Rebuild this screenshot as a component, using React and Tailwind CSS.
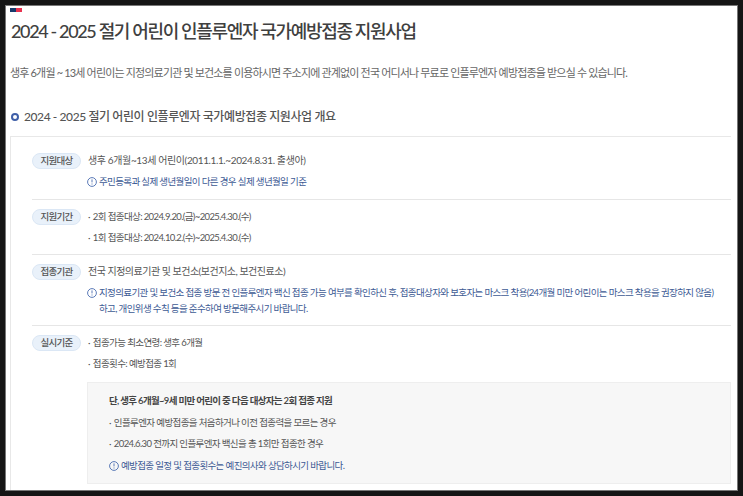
const FONT = "font-['Lato','Noto_Sans_CJK_KR',sans-serif]";

const InfoIcon = () => (
    <svg width="10" height="10" viewBox="0 0 10 10" fill="none" className="shrink-0 mt-[3px]">
        <circle cx="5" cy="5" r="4.4" stroke="#4a6cb0" strokeWidth="0.9" />
        <path d="M5 2.4v3M5 6.5v1" stroke="#4a6cb0" strokeWidth="0.9" />
    </svg>
);

const Badge = ({ children }) => (
    <span className="w-[49px] h-[16px] shrink-0 flex items-center justify-center rounded-full bg-[#e9f1fa] border border-[#dbe7f5] text-[9.5px] font-medium tracking-[-0.8px] text-[#555]">
        {children}
    </span>
);

const Note = ({ children, className = "" }) => (
    <div className={`flex gap-[2px] text-[9.5px] leading-[16px] tracking-[-0.63px] text-[#3d5a94] ${className}`}>
        <InfoIcon />
        <p>{children}</p>
    </div>
);

const Line = ({ children, className = "" }) => (
    <p className={`text-[10px] leading-[16px] text-[#555] ${className}`}>{children}</p>
);

// dotted list line
const Dot = ({ children, className = "" }) => (
    <p className={`text-[9.5px] leading-[16px] tracking-[-0.62px] text-[#555] ${className}`}>
        <span className="mr-[3px]">·</span>
        {children}
    </p>
);

const Row = ({ label, children, last }) => (
    <div className={`flex gap-[7px] pt-[9px] ${last ? "" : "border-b border-[#e6e6e6]"}`}>
        <Badge>{label}</Badge>
        <div className="flex-1 -mt-px">{children}</div>
    </div>
);

const App = () => {
    return (
        <div className={`w-[743px] h-[496px] overflow-hidden bg-[#151515] pt-[5px] pl-[5px] ${FONT}`}>
            <div className="w-[733px] h-[486px] bg-white border border-[#777] pl-[4px] pr-[6px] overflow-hidden">
                <div className="flex w-[12px] h-[4px] mt-[2px]">
                    <span className="w-[6px] bg-[#173a6b]" />
                    <span className="w-[6px] bg-[#e8324f]" />
                </div>
                <h1 className="mt-[6px] ml-px text-[18px] leading-[26px] font-medium tracking-[-1.35px] text-[#404040]">
                    2024 - 2025 절기 어린이 인플루엔자 국가예방접종 지원사업
                </h1>
                <p className="mt-[21px] text-[11px] leading-[16px] tracking-[-0.83px] text-[#666]">
                    생후 6개월 ~ 13세 어린이는 지정의료기관 및 보건소를 이용하시면 주소지에 관계없이 전국 어디서나 무료로 인플루엔자 예방접종을 받으실 수 있습니다.
                </p>
                <div className="mt-[27px] flex items-center gap-[5px]">
                    <span className="w-[8px] h-[8px] ml-px rounded-full border-2 border-[#3f5fa8]" />
                    <h2 className="text-[12px] leading-[18px] font-medium tracking-[-0.4px] text-[#555]">
                        2024 - 2025 절기 어린이 인플루엔자 국가예방접종 지원사업 개요
                    </h2>
                </div>

                <div className="mt-[10px] h-[360px] border-l border-t border-[#e8e8e8] pl-[21px] pt-[7px]">
                    <Row label="지원대상">
                        <Line className="tracking-[-0.38px]">생후 6개월~13세 어린이(2011.1.1.~2024.8.31. 출생아)</Line>
                        <Note className="mt-[6px] -ml-px pb-[9px]">주민등록과 실제 생년월일이 다른 경우 실제 생년월일 기준</Note>
                    </Row>
                    <Row label="지원기간">
                        <Dot className="mt-px">2회 접종대상: 2024.9.20.(금)~2025.4.30.(수)</Dot>
                        <Dot className="mt-[5px] pb-[8px]">1회 접종대상: 2024.10.2.(수)~2025.4.30.(수)</Dot>
                    </Row>
                    <Row label="접종기관">
                        <Line className="tracking-[-0.5px]">전국 지정의료기관 및 보건소(보건지소, 보건진료소)</Line>
                        <Note className="mt-[6px] -ml-px pb-[8px]">
                            지정의료기관 및 보건소 접종 방문 전 인플루엔자 백신 접종 가능 여부를 확인하신 후, 접종대상자와 보호자는 마스크 착용(24개월 미만 어린이는 마스크 착용을 권장하지 않음)
                            <br />
                            하고, 개인위생 수칙 등을 준수하여 방문해주시기 바랍니다.
                        </Note>
                    </Row>
                    <Row label="실시기준" last>
                        <Dot className="mt-px">접종가능 최소연령: 생후 6개월</Dot>
                        <Dot className="mt-[5px]">접종횟수: 예방접종 1회</Dot>
                        <div className="mt-[10px] -ml-px h-[102px] bg-[#f7f7f7] border border-[#eeeeee] pl-[21px] pt-[10px]">
                            <p className="text-[9.5px] leading-[16px] tracking-[-0.68px] font-semibold text-[#444]">단, 생후 6개월~9세 미만 어린이 중 다음 대상자는 2회 접종 지원</p>
                            <Dot className="mt-[6px]">인플루엔자 예방접종을 처음하거나 이전 접종력을 모르는 경우</Dot>
                            <Dot className="mt-[5px]">2024.6.30 전까지 인플루엔자 백신을 총 1회만 접종한 경우</Dot>
                            <Note className="mt-[6px]">예방접종 일정 및 접종횟수는 예진의사와 상담하시기 바랍니다.</Note>
                        </div>
                    </Row>
                </div>
            </div>
        </div>
    );
};

export default App;
